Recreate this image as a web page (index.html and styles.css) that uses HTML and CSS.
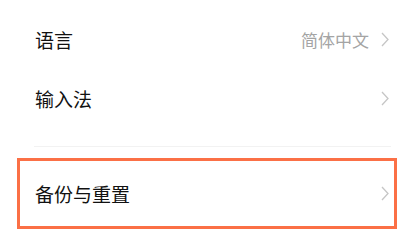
FILE: index.html
```html
<!DOCTYPE html>
<html lang="zh-CN">
<head>
<meta charset="utf-8">
<link rel="stylesheet" href="styles.css">
</head>
<body>
<div class="page">
  <div class="group">
    <div class="row">
      <span class="label">语言</span>
      <span class="right"><span class="value">简体中文</span><svg class="chev" viewBox="0 0 8 15" width="8" height="15"><polyline points="1,1 7,7.5 1,14" fill="none" stroke="#c6c6c6" stroke-width="1.3"/></svg></span>
    </div>
    <div class="row">
      <span class="label">输入法</span>
      <span class="right"><svg class="chev" viewBox="0 0 8 15" width="8" height="15"><polyline points="1,1 7,7.5 1,14" fill="none" stroke="#c6c6c6" stroke-width="1.3"/></svg></span>
    </div>
  </div>
  <div class="divider"></div>
  <div class="highlight">
    <div class="row row-hl">
      <span class="label">备份与重置</span>
      <span class="right"><svg class="chev" viewBox="0 0 8 15" width="8" height="15"><polyline points="1,1 7,7.5 1,14" fill="none" stroke="#c6c6c6" stroke-width="1.3"/></svg></span>
    </div>
  </div>
</div>
</body>
</html>
```
FILE: styles.css
```css
html, body {
  margin: 0;
  padding: 0;
  background: #ffffff;
}
.page {
  width: 408px;
  height: 243px;
  overflow: hidden;
  font-family: "Noto Sans CJK SC", "Noto Sans", sans-serif;
  padding-top: 10px;
  box-sizing: border-box;
}
.group {
  padding: 0 19px 0 35px;
}
.row {
  height: 59px;
  display: flex;
  align-items: center;
  justify-content: space-between;
}
.label {
  font-size: 19px;
  color: #111111;
  line-height: 1;
}
.right {
  display: flex;
  align-items: center;
}
.value {
  font-size: 17px;
  color: #a4a4a4;
  line-height: 1;
  margin-right: 12px;
}
.chev {
  display: block;
}
.divider {
  height: 1px;
  background: #f2f2f2;
  margin: 18px 17px 11px 34px;
}
.highlight {
  margin-left: 17px;
  width: 380px;
  height: 71px;
  box-sizing: border-box;
  border: 3px solid #fb7046;
  padding: 0 5px 0 15px;
}
.row-hl {
  height: 65px;
}
```
